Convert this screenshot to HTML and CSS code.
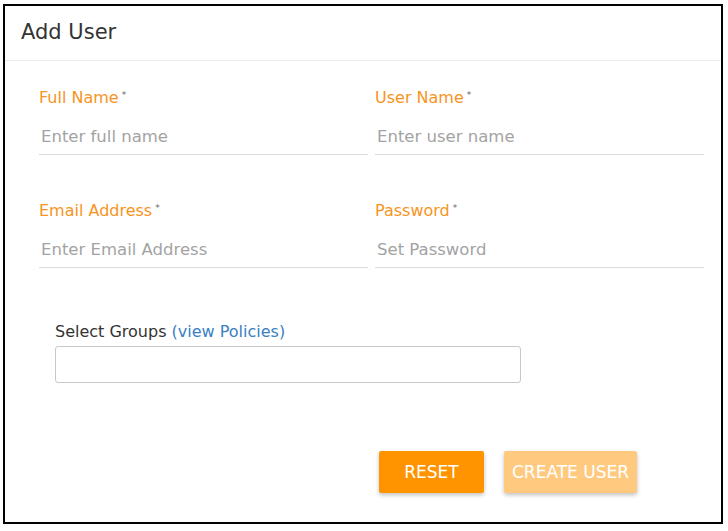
FILE: index.html
```html
<!DOCTYPE html>
<html>
<head>
<meta charset="utf-8">
<link rel="stylesheet" href="styles.css">
</head>
<body>
<div class="card">
  <div class="card-header">Add User</div>
  <div class="card-body">
    <div class="fields">
      <div class="field">
        <label class="label">Full Name<sup class="req">*</sup></label>
        <div class="input">Enter full name</div>
      </div>
      <div class="field">
        <label class="label">User Name<sup class="req">*</sup></label>
        <div class="input">Enter user name</div>
      </div>
      <div class="field">
        <label class="label">Email Address<sup class="req">*</sup></label>
        <div class="input">Enter Email Address</div>
      </div>
      <div class="field">
        <label class="label">Password<sup class="req">*</sup></label>
        <div class="input">Set Password</div>
      </div>
    </div>
    <div class="groups">
      <div class="groups-label">Select Groups <a class="link">(view Policies)</a></div>
      <div class="groups-box"></div>
    </div>
    <div class="actions">
      <button class="btn btn-primary">RESET</button>
      <button class="btn btn-disabled">CREATE USER</button>
    </div>
  </div>
</div>
</body>
</html>
```
FILE: styles.css
```css
html, body {
  margin: 0;
  padding: 0;
  background: #fff;
}
body {
  padding: 4px 0 0 3px;
  font-family: "DejaVu Sans", "Open Sans", sans-serif;
}
.card {
  box-sizing: border-box;
  width: 720px;
  height: 520px;
  border: 2px solid #000;
  background: #fff;
}
.card-header {
  box-sizing: border-box;
  height: 55px;
  border-bottom: 1px solid #ebebeb;
  padding: 0 16px 3px;
  display: flex;
  align-items: center;
  font-size: 21px;
  color: #333;
}
.card-body {
  padding: 27px 17px 0 34px;
}
.fields {
  display: grid;
  grid-template-columns: 329px 329px;
  column-gap: 7px;
  row-gap: 46px;
}
.field {
  display: flex;
  flex-direction: column;
}
.label {
  font-size: 16px;
  line-height: 20px;
  height: 20px;
  color: #f7941d;
  margin-bottom: 10px;
}
.req {
  font-size: 9px;
  color: #666;
  vertical-align: top;
  position: relative;
  top: -3px;
  margin-left: 3px;
}
.input {
  box-sizing: border-box;
  height: 37px;
  border-bottom: 1px solid #dcdcdc;
  font-size: 16.5px;
  color: #a3a3a3;
  padding: 8px 0 0 2px;
  line-height: 22px;
}
.groups {
  margin-top: 54px;
  padding-left: 16px;
}
.groups-label {
  font-size: 16px;
  line-height: 20px;
  color: #333;
}
.link {
  color: #3a7fc1;
}
.groups-box {
  box-sizing: border-box;
  margin-top: 4px;
  width: 466px;
  height: 37px;
  border: 1px solid #c8c8c8;
  border-radius: 3px;
}
.actions {
  display: flex;
  gap: 20px;
  margin-top: 68px;
  padding-left: 340px;
}
.btn {
  height: 42px;
  border: none;
  border-radius: 2px;
  color: #fff;
  font-family: "DejaVu Sans", "Open Sans", sans-serif;
  font-size: 17px;
  padding: 0;
  box-shadow: 0 2px 4px rgba(0,0,0,0.25);
}
.btn-primary {
  width: 105px;
  background: #ff9400;
}
.btn-disabled {
  width: 133px;
  background: #ffca80;
}
```
